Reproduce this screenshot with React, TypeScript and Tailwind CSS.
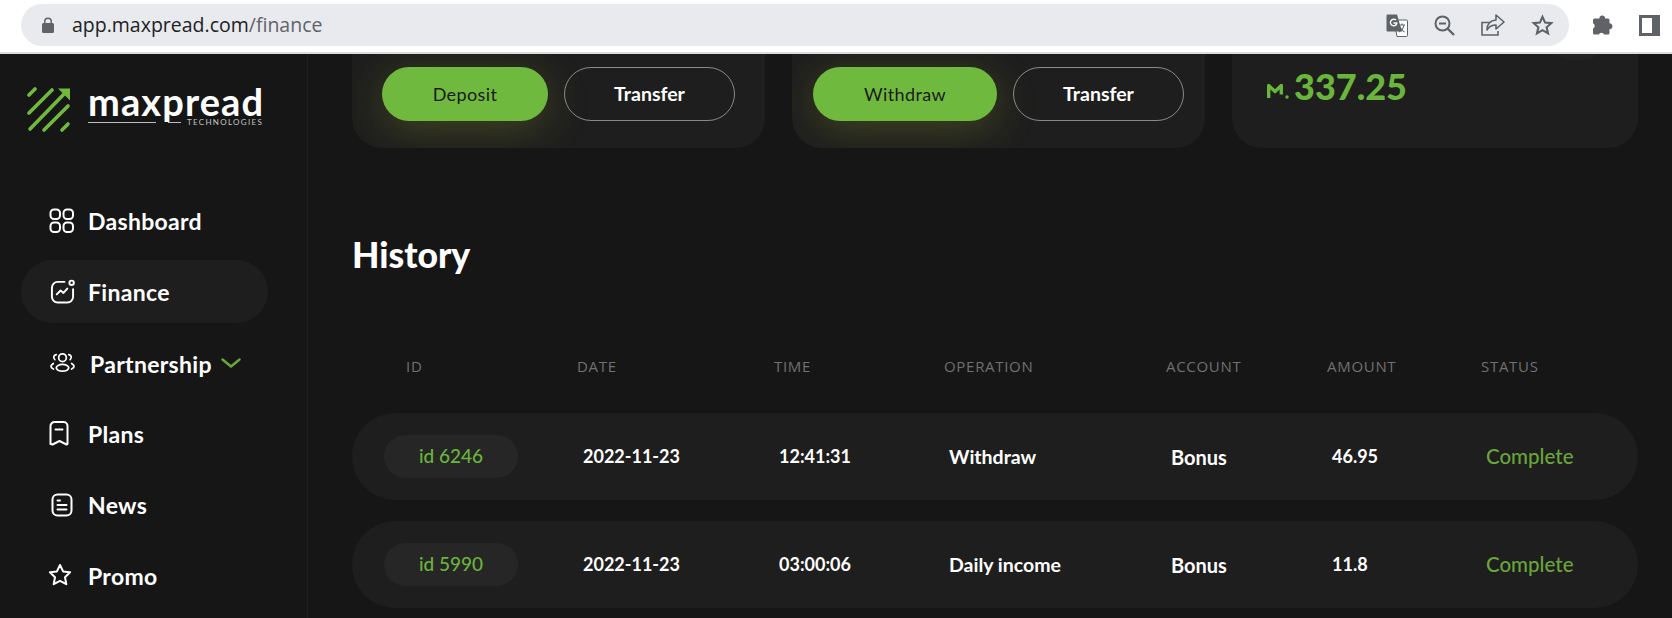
import React from "react";

interface MenuItem {
  label: string;
  icon: React.ReactNode;
  active?: boolean;
  open?: boolean;
}

interface HistoryRow {
  id: string;
  date: string;
  time: string;
  operation: string;
  account: string;
  amount: string;
  status: string;
}

const stroke = {
  fill: "none",
  stroke: "currentColor",
  strokeWidth: 2,
  strokeLinecap: "round" as const,
  strokeLinejoin: "round" as const,
};

const DashboardIcon = () => (
  <svg width="25" height="25" viewBox="0 0 25 25" {...stroke}>
    <rect x="1.5" y="1.5" width="9.5" height="9.5" rx="3.5" />
    <rect x="14.5" y="1.5" width="9.5" height="9.5" rx="3.5" />
    <rect x="1.5" y="14.5" width="9.5" height="9.5" rx="3.5" />
    <rect x="14.5" y="14.5" width="9.5" height="9.5" rx="3.5" />
  </svg>
);

const FinanceIcon = () => (
  <svg className="ml-[1px]" width="26" height="25" viewBox="0 0 26 25" {...stroke}>
    <path d="M15 2.5H8a6 6 0 0 0-6 6V18a6 6 0 0 0 6 6h10a6 6 0 0 0 6-6V10" />
    <circle cx="22.5" cy="3.5" r="2.3" />
    <path d="M7 15.5l4-4 3 2.5 4-4.5" />
  </svg>
);

const PartnershipIcon = () => (
  <svg className="ml-[1px]" width="26" height="21" viewBox="0 0 26 21" {...stroke} strokeWidth={1.8}>
    <circle cx="13" cy="5.5" r="4" />
    <path d="M6.5 2.2A3 3 0 0 0 5 7.5M19.5 2.2A3 3 0 0 1 21 7.5" />
    <ellipse cx="13" cy="16" rx="6.5" ry="3.5" />
    <path d="M3.5 11.5C2 12.5 1 13.5 1 14.5s.8 2 2.5 2.8M22.5 11.5c1.500 1 2.500 2 2.500 3s-.8 2-2.500 2.800" />
  </svg>
);

const PlansIcon = () => (
  <svg width="20" height="25" viewBox="0 0 20 25" {...stroke}>
    <path d="M1.500 23V5a4 4 0 0 1 4-4h9a4 4 0 0 1 4 4v18l-1 .5-7-3.500-7 3.500z" />
    <path d="M6.500 8.500h7" />
  </svg>
);

const NewsIcon = () => (
  <svg className="ml-[2px]" width="22" height="24" viewBox="0 0 22 24" {...stroke}>
    <rect x="1.500" y="1.500" width="19" height="21" rx="5" />
    <path d="M6.500 7.500h2.500M6.500 12h9M6.500 16.500h9" />
  </svg>
);

const PromoIcon = () => (
  <svg className="-ml-[1px] -mt-[2px]" width="24" height="24" viewBox="0 0 24 24" {...stroke}>
    <path d="M12 2l3.100 6.400 7 .9-5.100 4.900 1.300 7-6.300-3.400-6.300 3.400 1.300-7L1.900 9.300l7-.9z" />
  </svg>
);

const Navigate: MenuItem[] = [
  { label: "Dashboard", icon: <DashboardIcon /> },
  { label: "Finance", icon: <FinanceIcon />, active: true },
  { label: "Partnership", icon: <PartnershipIcon />, open: true },
  { label: "Plans", icon: <PlansIcon /> },
  { label: "News", icon: <NewsIcon /> },
  { label: "Promo", icon: <PromoIcon /> },
];

const rows: HistoryRow[] = [
  { id: "id 6246", date: "2022-11-23", time: "12:41:31", operation: "Withdraw", account: "Bonus", amount: "46.95", status: "Complete" },
  { id: "id 5990", date: "2022-11-23", time: "03:00:06", operation: "Daily income", account: "Bonus", amount: "11.8", status: "Complete" },
];

const headers = ["ID", "DATE", "TIME", "OPERATION", "ACCOUNT", "AMOUNT", "STATUS"];

const BrowserBar = () => (
  <div className="h-[54px] shrink-0 bg-white border-b-2 border-[#dcdcdc] flex items-start pt-[4px] pl-[21px] pr-[12px] text-[#5f6368]">
    <div className="w-[1548px] h-[42px] rounded-full bg-[#e8eaed] flex items-center pl-[21px] pr-[15px]">
      <svg width="12" height="16" viewBox="0 0 12 16" fill="currentColor">
        <path d="M2 6V4.500a4 4 0 0 1 8 0V6h.5A1.500 1.500 0 0 1 12 7.500v7a1.500 1.500 0 0 1-1.500 1.500h-9A1.500 1.500 0 0 1 0 14.500v-7A1.500 1.500 0 0 1 1.500 6zm1.500 0h5V4.500a2.500 2.500 0 0 0-5 0z" />
      </svg>
      <div className="ml-[18px] font-['Open_Sans',sans-serif] text-[19.5px] text-[#202124]">
        app.maxpread.com<span className="text-[#5f6368]">/finance</span>
      </div>
      <div className="ml-auto flex items-center gap-[26px]">
        <svg width="22" height="23" viewBox="0 0 22 23">
          <path d="M8 6h12.500a1 1 0 0 1 1 1v14.500a1 1 0 0 1-1 1H11z" fill="#fff" stroke="#5f6368" />
          <path d="M1.500 0.500h9.500l5 17H1.500a1 1 0 0 1-1-1v-15a1 1 0 0 1 1-1z" fill="#5f6368" />
          <path d="M11 8.500a3.300 3.300 0 1 1-1-2.400M7.500 9h3.500" fill="none" stroke="#fff" strokeWidth="1.400" />
          <path d="M13 11h6M16 9.500V11M18 11c-.5 3-3 6-5 7M14 13c.8 2 2.500 4 4.500 5" fill="none" stroke="#5f6368" strokeWidth="1.100" />
        </svg>
        <svg width="21" height="21" viewBox="0 0 21 21" fill="none" stroke="currentColor" strokeWidth="2">
          <circle cx="8.500" cy="8.500" r="7" />
          <path d="M13.500 13.500L20 20" strokeWidth="2.400" />
          <path d="M5 8.500h7" />
        </svg>
        <svg width="24" height="22" viewBox="0 0 24 22" fill="none" stroke="currentColor" strokeWidth="1.600">
          <path d="M8 8.500H1v12.500h16v-4" />
          <path d="M15 1l8 7-8 7v-4c-4 0-7 1.500-9 5 0-6 3-9.500 9-10z" strokeLinejoin="round" />
        </svg>
        <svg width="23" height="22" viewBox="0 0 24 23" fill="none" stroke="currentColor" strokeWidth="2.200">
          <path d="M12 3l2.700 6 6.500.6-4.900 4.300 1.500 6.400-5.800-3.400-5.800 3.400 1.500-6.400L2.800 9.600 9.300 9z" />
        </svg>
      </div>
    </div>
    <div className="ml-[22px] mt-[10px] flex items-center gap-[26px]">
      <svg width="22" height="22" viewBox="0 0 22 22" fill="currentColor">
        <path d="M6.500 4.500H8.300a3 3 0 0 1 5.600-1.500c.3.500.3 1 .2 1.500H17a1.500 1.500 0 0 1 1.500 1.500v3.300a3 3 0 0 1 1.500 5.600c-.5.300-1 .3-1.500.2V19a1.500 1.500 0 0 1-1.500 1.500h-3.800a3 3 0 0 0-5.400 0H3.500A1.500 1.500 0 0 1 2 19v-4.300a3 3 0 0 0 0-5.400V6a1.500 1.500 0 0 1 1.500-1.500z" />
      </svg>
      <div className="w-[21px] h-[21px] bg-[#5f6368] flex pl-[3px] py-[3px] pr-[8px]">
        <div className="flex-1 bg-white" />
      </div>
    </div>
  </div>
);

const Logo = () => (
  <div className="flex items-start h-[135px] pt-[33px] pl-[27px]">
    <svg width="44" height="46" viewBox="0 0 44 46" fill="none" strokeLinecap="round">
      <g stroke="#70b93f" strokeWidth="3.600">
        <path d="M2 8l6-6" />
        <path d="M2 26L25 3" />
        <path d="M3 42L40 4" />
        <path d="M17 43l24-24" />
        <path d="M35 43l6-6" />
      </g>
      <path d="M31 1.500h12v12z" fill="#70b93f" />
    </svg>
    <div className="ml-[17px] w-[178px] -mt-[4px]">
      <div className="font-['Lato',sans-serif] font-bold text-[38px] leading-[36px] text-white tracking-[1.1px]">maxpread</div>
      <div className="flex items-center -mt-[2px] h-[10px]">
        <div className="w-[68px] h-px bg-[#bdbdbd]" />
        <div className="ml-[12px] w-[13px] h-px bg-[#bdbdbd]" />
        <div className="ml-[6px] font-['Lato',sans-serif] text-[8px] tracking-[1.300px] text-[#c4c4c4]">TECHNOLOGIES</div>
      </div>
    </div>
  </div>
);

const Sidebar = () => (
  <aside className="w-[308px] shrink-0 border-r border-[#1e1e26] font-['Lato',sans-serif]">
    <Logo />
    <nav className="flex flex-col gap-[8px] ml-[21px] w-[247px]">
      {Navigate.map((item) => (
        <div
          key={item.label}
          className={
            item.active
              ? "h-[63px] rounded-full bg-[#1e1e1e] flex items-center pl-[28px] text-white"
              : "h-[63px] rounded-full flex items-center pl-[28px] text-white"
          }
        >
          <div className="w-[26px] flex justify-start">{item.icon}</div>
          <div className={item.open ? "ml-[15px] pt-[3px] text-[23px] font-bold tracking-[0.3px]" : "ml-[13px] pt-[2px] text-[23px] font-bold tracking-[0.3px]"}>{item.label}</div>
          {item.open ? (
            <svg className="ml-[9px]" width="20" height="10" viewBox="0 0 20 10" fill="none" stroke="#6aa53c" strokeWidth="2.500" strokeLinecap="round" strokeLinejoin="round">
              <path d="M1.500 1.500L10 8.500l8.500-7" />
            </svg>
          ) : null}
        </div>
      ))}
    </nav>
  </aside>
);

const ActionCard = ({ main, mainWidth, pl }: { main: string; mainWidth: string; pl: string }) => (
  <div className={`h-[94px] bg-[#1e1e1e] rounded-b-[30px] overflow-hidden pt-[13px] flex ${pl}`}>
    <div className={`h-[54px] ${mainWidth} rounded-full bg-[#70b93f] shadow-[0_8px_40px_rgba(150,160,40,0.3)] flex items-center justify-center text-[18px] text-[#1b1b1b] tracking-[0.4px]`}>
      {main}
    </div>
    <div className="h-[54px] w-[171px] ml-[16px] rounded-full border border-[#8a8a8a] flex items-center justify-center text-[19.5px] font-bold text-white">
      Transfer
    </div>
  </div>
);

const Cards = () => (
  <div className="grid grid-cols-[413px_413px_406px] gap-[27px]">
    <ActionCard main="Deposit" mainWidth="w-[166px]" pl="pl-[30px]" />
    <ActionCard main="Withdraw" mainWidth="w-[184px]" pl="pl-[21px]" />
    <div className="relative h-[94px] bg-[#1e1e1e] rounded-b-[30px] overflow-hidden flex items-start pt-[13px] pl-[35px]">
      <div className="absolute left-[320px] -top-[30px] w-[50px] h-[36px] rounded-full bg-[#222222]" />
      <svg className="mt-[15px]" width="22" height="17" viewBox="0 0 22 17" fill="none" stroke="#6ab53c" strokeWidth="3.400">
        <path d="M1.700 16V3.500l6.300 6 6.300-6v9" strokeLinejoin="round" />
        <circle cx="20" cy="15" r="1" fill="#6ab53c" strokeWidth="1.500" />
      </svg>
      <div className="ml-[5px] -mt-[1px] text-[36px] leading-[40px] font-black text-[#6ab53c]">337.25</div>
    </div>
  </div>
);

const HistoryTable = () => (
  <div>
    <div className="grid grid-cols-[171px_197px_170px_222px_161px_154px_1fr] pl-[54px] h-[24px] items-center font-['Open_Sans',sans-serif] text-[15px] tracking-[0.7px] text-[#707070]">
      {headers.map((title) => (
        <div key={title}>{title}</div>
      ))}
    </div>
    <div className="mt-[35px] flex flex-col gap-[21px]">
      {rows.map((row) => (
        <div
          key={row.id}
          className="h-[87px] rounded-full bg-[#1e1e1e] grid grid-cols-[231px_196px_170px_222px_161px_154px_1fr] items-center text-[18px] font-bold text-white"
        >
          <div className="pl-[32px]">
            <div className="w-[134px] h-[43px] rounded-[22px] bg-[#262626] flex items-center justify-center text-[19px] font-medium text-[#6ab53c]">
              {row.id}
            </div>
          </div>
          <div>{row.date}</div>
          <div>{row.time}</div>
          <div className="text-[19.5px]">{row.operation}</div>
          <div className="text-[20px]">{row.account}</div>
          <div>{row.amount}</div>
          <div className="text-[20.5px] font-medium text-[#6aa53c]">{row.status}</div>
        </div>
      ))}
    </div>
  </div>
);

const App = () => {
  return (
    <div className="w-[1672px] h-[618px] overflow-hidden flex flex-col bg-[#161616] font-['Lato',sans-serif]">
      <BrowserBar />
      <div className="flex flex-1 min-h-0">
        <Sidebar />
        <main className="flex-1 pl-[44px] pr-[34px]">
          <Cards />
          <h1 className="mt-[84px] text-[35.5px] leading-[46px] font-black text-white">History</h1>
          <div className="mt-[76px]">
            <HistoryTable />
          </div>
        </main>
      </div>
    </div>
  );
};

export default App;
